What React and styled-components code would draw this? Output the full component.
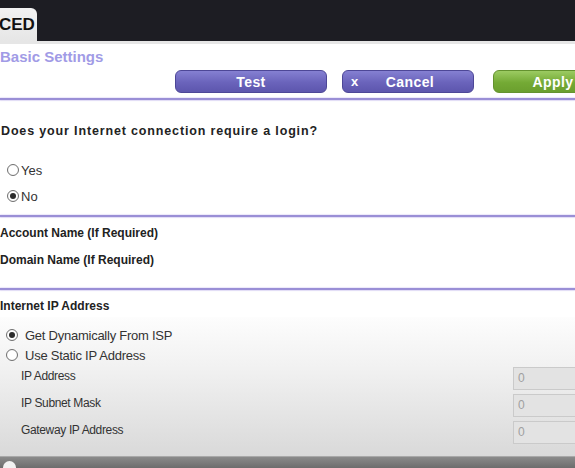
import React from "react";
import styled, { createGlobalStyle } from "styled-components";

const Global = createGlobalStyle`
  html, body { margin: 0; padding: 0; background: #fff; }
  body { width: 575px; height: 468px; overflow: hidden; font-family: "Liberation Sans", Arial, sans-serif; }
  #root { width: 575px; height: 468px; overflow: hidden; }
`;

const Page = styled.div`
  width: 575px;
  height: 468px;
  display: flex;
  flex-direction: column;
  overflow: hidden;
  background: #fff;
`;

const TopBar = styled.div`
  height: 41px;
  background: #1d1d23;
  display: flex;
  align-items: flex-end;
  flex-shrink: 0;
`;

const Tab = styled.div`
  width: 37px;
  height: 33px;
  background: linear-gradient(#f2f2f2, #e6e6e6);
  border-top-right-radius: 6px;
  font-size: 17px;
  font-weight: bold;
  color: #111;
  line-height: 33px;
  overflow: hidden;
  white-space: nowrap;
  text-indent: -1px;
`;

const Strip = styled.div`
  height: 3px;
  background: #e6e6e6;
  flex-shrink: 0;
`;

const Title = styled.div`
  margin-top: 3px;
  height: 20px;
  line-height: 20px;
  font-size: 15px;
  font-weight: bold;
  color: #a19be6;
  flex-shrink: 0;
`;

const ButtonRow = styled.div`
  margin-top: 3px;
  display: flex;
  padding-left: 175px;
  gap: 15px;
  flex-shrink: 0;
`;

const Button = styled.div`
  flex: 0 0 ${p => p.$w}px;
  height: 23px;
  box-sizing: border-box;
  border-radius: 6px;
  border: 1px solid ${p => (p.$green ? "#64922f" : "#4d4797")};
  background: ${p =>
    p.$green
      ? "linear-gradient(#9ccb62, #74aa35 55%, #6b9f2e)"
      : "linear-gradient(#8580d2, #6a63bb 55%, #5d56ad)"};
  color: #fff;
  font-size: 14px;
  font-weight: bold;
  display: flex;
  align-items: center;
  justify-content: ${p => (p.$left ? "flex-start" : "center")};
  padding-left: ${p => p.$pl || 0}px;
  margin-left: ${p => p.$ml || 0}px;
  letter-spacing: 0.4px;
  white-space: nowrap;
`;

const XMark = styled.span`
  width: 10px;
  font-size: 13px;
`;

const ButtonLabel = styled.span`
  flex: 1;
  text-align: center;
  padding-right: 14px;
`;

const Divider = styled.div`
  margin-top: ${p => p.$mt}px;
  height: 2px;
  background: #9a8fd6;
  box-shadow: 0 1px 1px #e0dbf6, 0 -1px 1px #ece8fa;
  flex-shrink: 0;
`;

const Question = styled.div`
  margin-top: 20px;
  height: 22px;
  line-height: 22px;
  font-size: 12.5px;
  font-weight: bold;
  color: #222;
  letter-spacing: 0.85px;
  padding-left: 1px;
  white-space: nowrap;
  flex-shrink: 0;
`;

const Group = styled.div`
  margin-top: ${p => p.$mt || 0}px;
  display: flex;
  flex-direction: column;
  flex-shrink: 0;
`;

const RadioRow = styled.div`
  height: ${p => p.$h}px;
  display: flex;
  align-items: center;
  padding-left: ${p => p.$pl}px;
  gap: ${p => p.$gap}px;
  font-size: ${p => p.$fs}px;
  letter-spacing: ${p => p.$ls || 0}px;
  color: #333;
`;

const Radio = styled.span`
  width: 12px;
  height: 12px;
  box-sizing: border-box;
  border-radius: 50%;
  border: 1px solid #707070;
  background: radial-gradient(circle, #fff 55%, #e2e2e2 100%);
  display: flex;
  align-items: center;
  justify-content: center;
  flex-shrink: 0;
  &::after {
    content: "";
    width: 6px;
    height: 6px;
    border-radius: 50%;
    background: ${p => (p.$checked ? "#2b2b2b" : "transparent")};
  }
`;

const FieldLabel = styled.div`
  height: 27px;
  line-height: 27px;
  font-size: 12px;
  font-weight: bold;
  color: #222;
  flex-shrink: 0;
`;

const SectionLabel = styled.div`
  margin-top: 5px;
  height: 22px;
  line-height: 22px;
  font-size: 12px;
  font-weight: bold;
  color: #222;
  flex-shrink: 0;
`;

const GraySection = styled.div`
  flex: 1;
  padding-top: 8px;
  padding-bottom: 10px;
  background: linear-gradient(#fdfdfd, #f0f0f0 40%, #d9d9d9);
  display: flex;
  flex-direction: column;
`;

const InputRow = styled.div`
  height: 27px;
  display: flex;
  align-items: center;
  padding-left: 21px;
  font-size: 12px;
  letter-spacing: -0.35px;
  color: #333;
`;

const InputLabel = styled.span`
  flex: 1;
  padding-bottom: 5px;
`;

const Field = styled.div`
  width: 70px;
  height: 23px;
  box-sizing: border-box;
  border: 1px solid #cacaca;
  background: #e3e3e3;
  color: #a0a0a0;
  font-size: 12px;
  line-height: 21px;
  padding-left: 4px;
  margin-right: -8px;
  flex-shrink: 0;
`;

const BottomBar = styled.div`
  height: 12px;
  background: linear-gradient(#8a8a8a, #6a6a6a);
  border-top: 1px solid #a8a8a8;
  display: flex;
  padding-left: 3px;
  overflow: hidden;
  flex-shrink: 0;
`;

const BottomDot = styled.span`
  width: 13px;
  height: 13px;
  margin-top: 4px;
  border-radius: 50%;
  background: #f2f2f2;
`;

export default function App() {
  return (
    <Page>
      <Global />
      <TopBar>
        <Tab>CED</Tab>
      </TopBar>
      <Strip />
      <Title>Basic Settings</Title>
      <ButtonRow>
        <Button $w={152}>Test</Button>
        <Button $w={132} $left $pl={8}>
          <XMark>x</XMark>
          <ButtonLabel>Cancel</ButtonLabel>
        </Button>
        <Button $w={120} $green $ml={4}>Apply</Button>
      </ButtonRow>
      <Divider $mt={5} />
      <Question>Does your Internet connection require a login?</Question>
      <Group $mt={15}>
        <RadioRow $h={26} $pl={7} $gap={2} $fs={13}>
          <Radio />
          <span>Yes</span>
        </RadioRow>
        <RadioRow $h={26} $pl={7} $gap={2} $fs={13}>
          <Radio $checked />
          <span>No</span>
        </RadioRow>
      </Group>
      <Divider $mt={6} />
      <Group $mt={3}>
        <FieldLabel>Account Name (If Required)</FieldLabel>
        <FieldLabel>Domain Name (If Required)</FieldLabel>
      </Group>
      <Divider $mt={14} />
      <SectionLabel>Internet IP Address</SectionLabel>
      <GraySection>
        <RadioRow $h={20} $pl={6} $gap={7} $fs={13} $ls={-0.25}>
          <Radio $checked />
          <span>Get Dynamically From ISP</span>
        </RadioRow>
        <RadioRow $h={20} $pl={6} $gap={7} $fs={13} $ls={-0.25}>
          <Radio />
          <span>Use Static IP Address</span>
        </RadioRow>
        <InputRow>
          <InputLabel>IP Address</InputLabel>
          <Field>0</Field>
        </InputRow>
        <InputRow>
          <InputLabel>IP Subnet Mask</InputLabel>
          <Field>0</Field>
        </InputRow>
        <InputRow>
          <InputLabel>Gateway IP Address</InputLabel>
          <Field>0</Field>
        </InputRow>
      </GraySection>
      <BottomBar>
        <BottomDot />
      </BottomBar>
    </Page>
  );
}
